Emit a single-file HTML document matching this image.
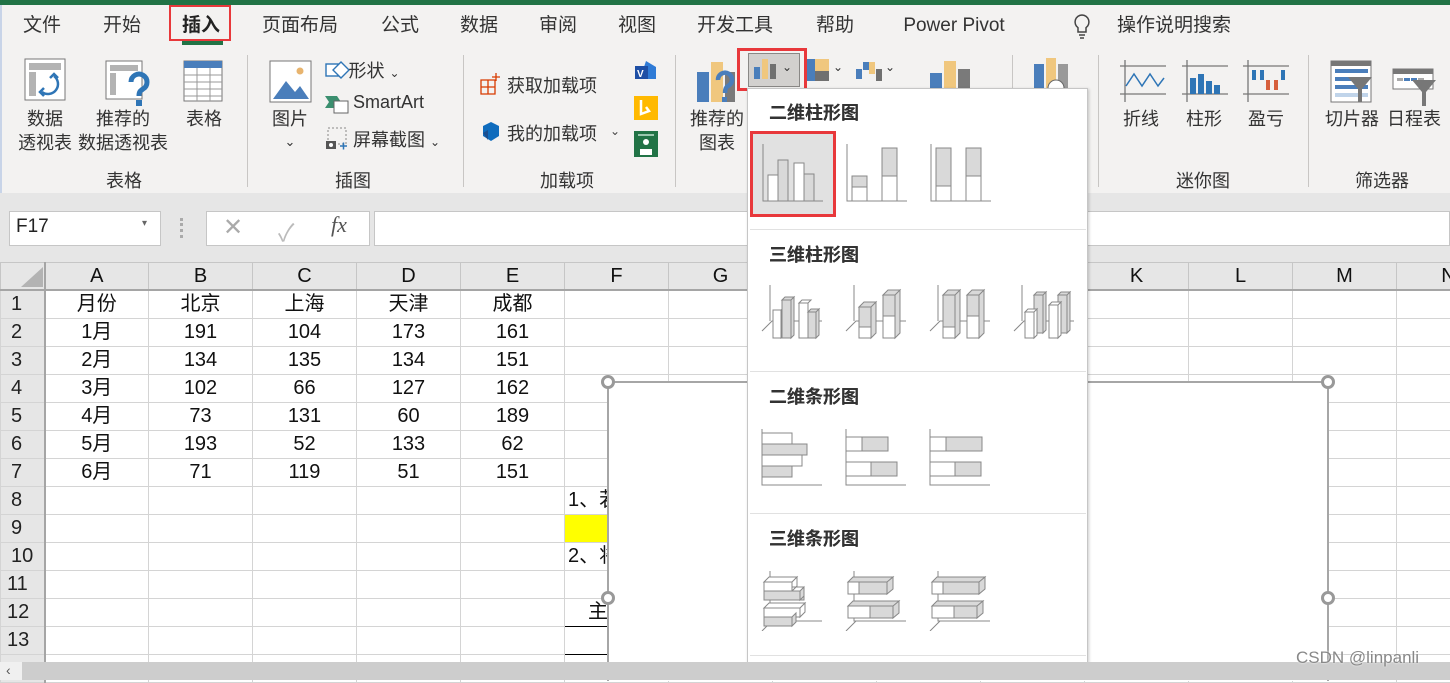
<!DOCTYPE html>
<html><head><meta charset="utf-8">
<style>
*{margin:0;padding:0;box-sizing:border-box}
body{width:1450px;height:680px;overflow:hidden;background:#fff;font-family:"Liberation Sans","Noto Sans CJK SC",sans-serif;position:relative;color:#262626}
.a{position:absolute}
.t{position:absolute;font-size:19px;color:#333;white-space:nowrap;transform:translateX(-50%);line-height:24px}
.r{position:absolute;font-size:18px;color:#333;white-space:nowrap;text-align:center;transform:translateX(-50%);line-height:24px}
.sep{position:absolute;top:55px;width:1px;height:132px;background:#c8c6c4}
.gh{position:absolute;font-size:18px;color:#333;white-space:nowrap;font-weight:bold;text-shadow:0 0 0 #000}
table{border-collapse:collapse;position:absolute;left:0;top:262px;table-layout:fixed;width:1500px}
td{border:1px solid #d4d4d4;height:28px;font-size:20px;text-align:center;color:#111;padding:0;line-height:26px;font-family:"Liberation Sans","Noto Sans CJK SC",sans-serif;overflow:hidden;white-space:nowrap}
tr.hd td{height:27px;background:#e6e6e6;border-color:#c6c6c6;border-bottom:2px solid #a5a5a5}
td.rh{border-right:2px solid #a5a5a5;background:#e6e6e6;text-align:left;padding-left:10px;color:#222}
.hnd{position:absolute;width:14px;height:14px;border:3px solid #999;border-radius:50%;background:#fff}
</style></head><body>
<div class="a" style="left:0;top:0;width:1450px;height:5px;background:#217346"></div>
<div class="a" style="left:0;top:5px;width:1450px;height:188px;background:#f3f2f1"></div>
<div class="a" style="left:0;top:5px;width:2px;height:188px;background:#c8d4e8"></div>
<div class="t" style="left:42px;top:14px">文件</div>
<div class="t" style="left:122px;top:14px">开始</div>
<div class="t" style="left:201px;top:14px;font-weight:bold;color:#222">插入</div>
<div class="a" style="left:169px;top:5px;width:62px;height:36px;border:2px solid #e8383b"></div>
<div class="a" style="left:182px;top:41px;width:41px;height:4px;background:#217346"></div>
<div class="t" style="left:300px;top:14px">页面布局</div>
<div class="t" style="left:400px;top:14px">公式</div>
<div class="t" style="left:479px;top:14px">数据</div>
<div class="t" style="left:558px;top:14px">审阅</div>
<div class="t" style="left:637px;top:14px">视图</div>
<div class="t" style="left:735px;top:14px">开发工具</div>
<div class="t" style="left:835px;top:14px">帮助</div>
<div class="t" style="left:954px;top:14px">Power Pivot</div>
<svg class="a" style="left:1072px;top:13px" width="20" height="28"><path d="M10 2a7 7 0 0 0-4 12.7V19h8v-4.3A7 7 0 0 0 10 2z M7 22h6 M8 25h4" fill="none" stroke="#444" stroke-width="1.5"/></svg>
<div class="t" style="left:1174px;top:14px">操作说明搜索</div>

<svg class="a" style="left:24px;top:58px" width="44" height="44"><rect x="1" y="1" width="40" height="41" fill="#fff" stroke="#777"/><rect x="5" y="5" width="32" height="7" fill="#b3b3b3"/><rect x="5" y="14" width="7" height="24" fill="#b3b3b3"/><path d="M30 18a10 10 0 0 1-12 16" fill="none" stroke="#2e75b6" stroke-width="2.5"/><path d="M26 20l4-4 4 4M20 30l-4 4 4 4" fill="none" stroke="#2e75b6" stroke-width="2.5"/></svg>
<svg class="a" style="left:105px;top:60px" width="48" height="48"><rect x="1" y="1" width="36" height="38" fill="#fff" stroke="#777"/><rect x="5" y="5" width="28" height="6" fill="#b3b3b3"/><rect x="5" y="13" width="6" height="22" fill="#b3b3b3"/><path d="M26 22a8 8 0 1 1 12 7c-3 2-4 3-4 7" fill="none" stroke="#2e75b6" stroke-width="5"/><rect x="31" y="40" width="6" height="6" fill="#2e75b6"/></svg>
<svg class="a" style="left:183px;top:60px" width="42" height="42"><rect x="1" y="1" width="38" height="40" fill="#fff" stroke="#777"/><rect x="1" y="1" width="38" height="7" fill="#4a7ebb"/><path d="M1 15h38M1 22h38M1 29h38M1 36h38M14 8v33M27 8v33" stroke="#999"/></svg>
<div class="r" style="left:45px;top:107px">数据<br>透视表</div>
<div class="r" style="left:123px;top:107px">推荐的<br>数据透视表</div>
<div class="r" style="left:204px;top:107px">表格</div>
<div class="r" style="left:124px;top:169px">表格</div>
<div class="sep" style="left:247px"></div>

<svg class="a" style="left:269px;top:60px" width="44" height="44"><rect x="1" y="1" width="41" height="41" fill="#fff" stroke="#777"/><path d="M4 39l13-18 9 11 5-6 9 13z" fill="#4a7ebb"/><circle cx="31" cy="11" r="3.5" fill="#e8b46e"/></svg>
<div class="r" style="left:290px;top:107px">图片</div>
<div class="r" style="left:290px;top:130px;font-size:13px">⌄</div>
<svg class="a" style="left:325px;top:58px" width="26" height="26"><rect x="1" y="6" width="12" height="12" fill="#fff" stroke="#2e75b6" stroke-width="1.4"/><path d="M16 4l8 8-8 8-8-8z" fill="#fff" stroke="#2e75b6" stroke-width="1.4"/></svg>
<div class="r" style="left:374px;top:59px;font-size:18px">形状 <span style="font-size:12px">⌄</span></div>
<svg class="a" style="left:325px;top:94px" width="26" height="20"><path d="M0 2h12l4 6-4 6H0l4-6z" fill="#3b8f6f"/><rect x="9" y="7" width="14" height="12" fill="#fff" stroke="#666"/></svg>
<div class="a" style="left:353px;top:92px;font-size:18px;color:#333">SmartArt</div>
<svg class="a" style="left:325px;top:126px" width="26" height="26"><rect x="3" y="2" width="18" height="16" fill="none" stroke="#888" stroke-dasharray="2 2"/><rect x="1" y="15" width="10" height="8" fill="#555"/><circle cx="6" cy="19" r="2" fill="#fff"/><path d="M15 20h7M18.5 16.5v7" stroke="#2e75b6" stroke-width="1.5"/></svg>
<div class="a" style="left:353px;top:126px;font-size:18px;color:#333">屏幕截图 <span style="font-size:12px">⌄</span></div>
<div class="r" style="left:353px;top:169px">插图</div>
<div class="sep" style="left:463px"></div>

<svg class="a" style="left:480px;top:73px" width="22" height="22"><path d="M1 7h14v14H1zM1 14h14M8 7v14M12 4h8M16 0v8" fill="none" stroke="#d83b01" stroke-width="1.3"/></svg>
<div class="a" style="left:507px;top:72px;font-size:18px;color:#333">获取加载项</div>
<svg class="a" style="left:481px;top:121px" width="20" height="22"><path d="M10 1l8 4v10l-8 5-8-5V5z" fill="#0f6cbd"/><path d="M2 12l5-3v10z" fill="#1c4f8f"/></svg>
<div class="a" style="left:507px;top:120px;font-size:18px;color:#333">我的加载项</div>
<div class="a" style="left:610px;top:124px;font-size:12px;color:#444">⌄</div>
<svg class="a" style="left:634px;top:60px" width="24" height="24"><path d="M12 1l10 6v12H6z" fill="#2f7bd6"/><rect x="1" y="6" width="13" height="13" fill="#1e4fa5"/><text x="3" y="17" font-size="10" fill="#fff" font-family="Liberation Sans" font-weight="bold">V</text></svg>
<svg class="a" style="left:634px;top:96px" width="24" height="24"><rect width="24" height="24" fill="#ffb900"/><path d="M7 4v14l8-3-3-4" fill="none" stroke="#fff" stroke-width="2.5"/></svg>
<svg class="a" style="left:634px;top:131px" width="24" height="26"><rect width="24" height="26" fill="#217346"/><circle cx="12" cy="11" r="3" fill="#fff"/><path d="M6 24v-6h12v6" fill="#fff"/><path d="M4 4h16" stroke="#9ac7ae" stroke-width="2"/></svg>
<div class="r" style="left:567px;top:169px">加载项</div>
<div class="sep" style="left:675px"></div>

<svg class="a" style="left:697px;top:60px" width="44" height="48"><rect x="0" y="12" width="12" height="30" fill="#4a7ebb"/><rect x="14" y="2" width="12" height="40" fill="#f0c77e"/><rect x="28" y="12" width="10" height="30" fill="#7a7a7a"/><path d="M21 20a7 7 0 1 1 10 6c-2 1-3 3-3 7" fill="none" stroke="#4a7ebb" stroke-width="4.5"/><rect x="25" y="37" width="5" height="5" fill="#4a7ebb"/></svg>
<div class="r" style="left:717px;top:107px">推荐的<br>图表</div>
<div class="a" style="left:748px;top:53px;width:52px;height:34px;background:#d2d0ce;border:1px solid #8a8886"></div>
<svg class="a" style="left:752px;top:57px" width="26" height="26"><rect x="2" y="10" width="6" height="12" fill="#4a7ebb"/><rect x="10" y="2" width="6" height="20" fill="#f0c77e"/><rect x="18" y="7" width="6" height="15" fill="#707070"/></svg>
<div class="a" style="left:782px;top:60px;font-size:12px;color:#333">⌄</div>
<div class="a" style="left:737px;top:48px;width:70px;height:43px;border:3px solid #e8383b"></div>
<svg class="a" style="left:806px;top:57px" width="26" height="26"><rect x="1" y="2" width="8" height="22" fill="#4a7ebb"/><rect x="9" y="2" width="14" height="12" fill="#f0c77e"/><rect x="9" y="14" width="14" height="10" fill="#707070"/></svg>
<div class="a" style="left:833px;top:60px;font-size:12px;color:#333">⌄</div>
<svg class="a" style="left:855px;top:57px" width="28" height="26"><rect x="1" y="12" width="6" height="10" fill="#4a7ebb"/><rect x="8" y="5" width="6" height="8" fill="#4a7ebb"/><rect x="14" y="5" width="6" height="12" fill="#f0c77e"/><rect x="21" y="12" width="6" height="12" fill="#707070"/></svg>
<div class="a" style="left:885px;top:60px;font-size:12px;color:#333">⌄</div>
<svg class="a" style="left:930px;top:59px" width="46" height="36"><rect x="0" y="14" width="12" height="22" fill="#4a7ebb"/><rect x="14" y="2" width="12" height="34" fill="#f0c77e"/><rect x="28" y="10" width="12" height="26" fill="#7a7a7a"/></svg>
<div class="sep" style="left:1012px"></div>
<svg class="a" style="left:1034px;top:58px" width="44" height="34"><rect x="0" y="6" width="10" height="28" fill="#4a7ebb"/><rect x="12" y="0" width="10" height="34" fill="#f0c77e"/><rect x="24" y="6" width="10" height="28" fill="#999"/><circle cx="22" cy="30" r="8" fill="#fff" stroke="#666"/></svg>
<div class="sep" style="left:1098px"></div>

<svg class="a" style="left:1120px;top:60px" width="46" height="42"><path d="M0 6h46M0 34h46M5 0v42" stroke="#777" stroke-width="1.3"/><path d="M6 26l8-12 8 12 8-12 8 12 6-8" fill="none" stroke="#2e75b6" stroke-width="1.5"/></svg>
<svg class="a" style="left:1182px;top:60px" width="46" height="42"><path d="M0 6h46M0 34h46M5 0v42" stroke="#777" stroke-width="1.3"/><rect x="8" y="18" width="6" height="16" fill="#2e75b6"/><rect x="16" y="14" width="6" height="20" fill="#2e75b6"/><rect x="24" y="21" width="6" height="13" fill="#2e75b6"/><rect x="32" y="25" width="6" height="9" fill="#2e75b6"/></svg>
<svg class="a" style="left:1243px;top:60px" width="46" height="42"><path d="M0 6h46M0 34h46M5 0v42" stroke="#777" stroke-width="1.3"/><rect x="9" y="10" width="4" height="10" fill="#2e75b6"/><rect x="17" y="10" width="4" height="10" fill="#2e75b6"/><rect x="23" y="20" width="4" height="10" fill="#d65f3c"/><rect x="31" y="20" width="4" height="10" fill="#d65f3c"/><rect x="38" y="10" width="4" height="10" fill="#2e75b6"/></svg>
<div class="r" style="left:1141px;top:107px">折线</div>
<div class="r" style="left:1204px;top:107px">柱形</div>
<div class="r" style="left:1266px;top:107px">盈亏</div>
<div class="r" style="left:1203px;top:169px">迷你图</div>
<div class="sep" style="left:1308px"></div>
<svg class="a" style="left:1330px;top:60px" width="44" height="44"><rect x="1" y="1" width="40" height="41" fill="#fff" stroke="#777"/><rect x="1" y="1" width="40" height="5" fill="#777"/><rect x="5" y="9" width="33" height="4" fill="#4a7ebb"/><rect x="5" y="17" width="33" height="4" fill="#4a7ebb"/><rect x="5" y="25" width="33" height="4" fill="#4a7ebb"/><rect x="5" y="33" width="33" height="4" fill="#c0d4ea"/><path d="M18 17h24l-10 12v13h-4V29z" fill="#777"/></svg>
<svg class="a" style="left:1392px;top:68px" width="46" height="40"><rect x="1" y="1" width="40" height="20" fill="#fff" stroke="#777"/><rect x="1" y="1" width="40" height="5" fill="#777"/><rect x="5" y="10" width="6" height="3" fill="#aaa"/><rect x="12" y="10" width="6" height="3" fill="#4a7ebb"/><rect x="19" y="10" width="6" height="3" fill="#4a7ebb"/><rect x="26" y="10" width="6" height="3" fill="#aaa"/><path d="M20 12h24l-10 12v14h-4V24z" fill="#777"/></svg>
<div class="r" style="left:1352px;top:107px">切片器</div>
<div class="r" style="left:1414px;top:107px">日程表</div>
<div class="r" style="left:1382px;top:169px">筛选器</div>

<div class="a" style="left:0;top:193px;width:1450px;height:69px;background:#e6e6e6"></div>
<div class="a" style="left:9px;top:211px;width:152px;height:35px;background:#fff;border:1px solid #c6c6c6"></div>
<div class="a" style="left:16px;top:216px;font-size:19px;color:#222">F17</div>
<div class="a" style="left:142px;top:218px;font-size:10px;color:#666">▾</div>
<div class="a" style="left:180px;top:218px;width:3px;height:20px;border-left:3px dotted #aaa"></div>
<div class="a" style="left:206px;top:211px;width:164px;height:35px;background:#fff;border:1px solid #c6c6c6"></div>
<div class="a" style="left:223px;top:213px;font-size:24px;color:#aaa">✕</div>
<div class="a" style="left:278px;top:213px;font-size:24px;color:#bbb">✓</div>
<div class="a" style="left:331px;top:212px;font-size:22px;color:#555;font-family:'Liberation Serif',serif;font-style:italic">fx</div>
<div class="a" style="left:374px;top:211px;width:1076px;height:35px;background:#fff;border:1px solid #c6c6c6"></div>

<table>
<colgroup><col style="width:44px"><col style="width:104px"><col style="width:104px"><col style="width:104px"><col style="width:104px"><col style="width:104px"><col style="width:104px"><col style="width:104px"><col style="width:104px"><col style="width:104px"><col style="width:104px"><col style="width:104px"><col style="width:104px"><col style="width:104px"><col style="width:104px"></colgroup>
<tr class="hd"><td style="border-right:2px solid #a5a5a5"><svg width="30" height="22" style="display:block;margin-left:12px"><path d="M30 2v20H8z" fill="#b3b3b3"/></svg></td><td>A</td><td>B</td><td>C</td><td>D</td><td>E</td><td>F</td><td>G</td><td>H</td><td>I</td><td>J</td><td>K</td><td>L</td><td>M</td><td>N</td></tr>
<tr><td class="rh">1</td><td>月份</td><td>北京</td><td>上海</td><td>天津</td><td>成都</td><td></td><td></td><td></td><td></td><td></td><td></td><td></td><td></td><td></td></tr>
<tr><td class="rh">2</td><td>1月</td><td>191</td><td>104</td><td>173</td><td>161</td><td></td><td></td><td></td><td></td><td></td><td></td><td></td><td></td><td></td></tr>
<tr><td class="rh">3</td><td>2月</td><td>134</td><td>135</td><td>134</td><td>151</td><td></td><td></td><td></td><td></td><td></td><td></td><td></td><td></td><td></td></tr>
<tr><td class="rh">4</td><td>3月</td><td>102</td><td>66</td><td>127</td><td>162</td><td></td><td></td><td></td><td></td><td></td><td></td><td></td><td></td><td></td></tr>
<tr><td class="rh">5</td><td>4月</td><td>73</td><td>131</td><td>60</td><td>189</td><td></td><td></td><td></td><td></td><td></td><td></td><td></td><td></td><td></td></tr>
<tr><td class="rh">6</td><td>5月</td><td>193</td><td>52</td><td>133</td><td>62</td><td></td><td></td><td></td><td></td><td></td><td></td><td></td><td></td><td></td></tr>
<tr><td class="rh">7</td><td>6月</td><td>71</td><td>119</td><td>51</td><td>151</td><td></td><td></td><td></td><td></td><td></td><td></td><td></td><td></td><td></td></tr>
<tr><td class="rh">8</td><td></td><td></td><td></td><td></td><td></td><td style="text-align:left;padding-left:3px">1、若</td><td></td><td></td><td></td><td></td><td></td><td></td><td></td><td></td></tr>
<tr><td class="rh">9</td><td></td><td></td><td></td><td></td><td></td><td style="background:#ffff00"></td><td></td><td></td><td></td><td></td><td></td><td></td><td></td><td></td></tr>
<tr><td class="rh">10</td><td></td><td></td><td></td><td></td><td></td><td style="text-align:left;padding-left:3px">2、将</td><td></td><td></td><td></td><td></td><td></td><td></td><td></td><td></td></tr>
<tr><td class="rh" style="padding-left:6px">11</td><td></td><td></td><td></td><td></td><td></td><td></td><td></td><td></td><td></td><td></td><td></td><td></td><td></td><td></td></tr>
<tr><td class="rh" style="padding-left:6px">12</td><td></td><td></td><td></td><td></td><td></td><td style="border:1px solid #000;text-align:right;padding-right:60px">主</td><td></td><td></td><td></td><td></td><td></td><td></td><td></td><td></td></tr>
<tr><td class="rh" style="padding-left:6px">13</td><td></td><td></td><td></td><td></td><td></td><td style="border:1px solid #000"></td><td></td><td></td><td></td><td></td><td></td><td></td><td></td><td></td></tr>
<tr><td class="rh"></td><td></td><td></td><td></td><td></td><td></td><td></td><td></td><td></td><td></td><td></td><td></td><td></td><td></td><td></td></tr>
</table>

<div class="a" style="left:607px;top:381px;width:722px;height:300px;background:#fff;border:2px solid #a6a6a6;border-bottom:none"></div>
<div class="hnd" style="left:601px;top:375px"></div>
<div class="hnd" style="left:1321px;top:375px"></div>
<div class="hnd" style="left:601px;top:591px"></div>
<div class="hnd" style="left:1321px;top:591px"></div>

<div class="a" style="left:747px;top:88px;width:341px;height:580px;background:#fff;border:1px solid #c6c6c6;box-shadow:1px 1px 3px rgba(0,0,0,.2)"></div>
<div class="gh" style="left:769px;top:99px">二维柱形图</div>
<div class="a" style="left:750px;top:131px;width:86px;height:86px;background:#e1e1e1;border:3px solid #e8383b"></div>
<svg class="a" style="left:755px;top:140px" width="320" height="65">
<g fill="#fff" stroke="#888" stroke-width="1">
<path d="M8 4v57h60" fill="none"/><rect x="13" y="35" width="10" height="26"/><rect x="23" y="20" width="10" height="41" fill="#d9d9d9"/><rect x="39" y="23" width="10" height="38"/><rect x="49" y="34" width="10" height="27" fill="#d9d9d9"/>
<path d="M92 4v57h60" fill="none"/><rect x="97" y="36" width="15" height="25" fill="#d9d9d9"/><rect x="97" y="47" width="15" height="14"/><rect x="127" y="8" width="15" height="53" fill="#d9d9d9"/><rect x="127" y="36" width="15" height="25"/>
<path d="M176 4v57h60" fill="none"/><rect x="181" y="8" width="15" height="53" fill="#d9d9d9"/><rect x="181" y="46" width="15" height="15"/><rect x="211" y="8" width="15" height="53" fill="#d9d9d9"/><rect x="211" y="36" width="15" height="25"/>
</g></svg>
<div class="a" style="left:750px;top:229px;width:336px;height:1px;background:#e1e1e1"></div>
<div class="gh" style="left:769px;top:241px">三维柱形图</div>
<svg class="a" style="left:760px;top:285px" width="320" height="60">
<g stroke="#888" stroke-width="1" fill="#fff">
<path d="M10 0v36M2 46l10-10h50M94 0v36M86 46l10-10h50M178 0v36M170 46l10-10h50M262 0v36M254 46l10-10h50" fill="none"/>
<rect x="13" y="25" width="8" height="28"/><path d="M21 25l4-3v28l-4 3z"/><rect x="22" y="15" width="9" height="38" fill="#d9d9d9"/><path d="M22 15l3-3h9l-3 3zM31 15l3-3v38l-3 3z" fill="#d9d9d9"/>
<rect x="39" y="18" width="9" height="35"/><path d="M39 18l3-3h9l-3 3z"/><rect x="48" y="27" width="8" height="26" fill="#d9d9d9"/><path d="M48 27l3-3h8l-3 3zM56 27l3-3v26l-3 3z" fill="#d9d9d9"/>
<rect x="99" y="22" width="12" height="31"/><rect x="99" y="22" width="12" height="20" fill="#d9d9d9"/><path d="M99 22l5-5h12l-5 5zM111 22l5-5v31l-5 5z" fill="#d9d9d9"/>
<rect x="123" y="10" width="12" height="43"/><rect x="123" y="10" width="12" height="21" fill="#d9d9d9"/><path d="M123 10l5-5h12l-5 5zM135 10l5-5v43l-5 5z" fill="#d9d9d9"/>
<rect x="183" y="10" width="12" height="43"/><rect x="183" y="10" width="12" height="32" fill="#d9d9d9"/><path d="M183 10l5-5h12l-5 5zM195 10l5-5v43l-5 5z" fill="#d9d9d9"/>
<rect x="207" y="10" width="12" height="43"/><rect x="207" y="10" width="12" height="21" fill="#d9d9d9"/><path d="M207 10l5-5h12l-5 5zM219 10l5-5v43l-5 5z" fill="#d9d9d9"/>
<rect x="274" y="10" width="9" height="38" fill="#d9d9d9"/><path d="M274 10l3-3h9l-3 3zM283 10l3-3v38l-3 3z" fill="#d9d9d9"/>
<rect x="265" y="27" width="9" height="26"/><path d="M265 27l3-3h9l-3 3zM274 27l3-3v26l-3 3z"/>
<rect x="298" y="10" width="9" height="38" fill="#d9d9d9"/><path d="M298 10l3-3h9l-3 3zM307 10l3-3v38l-3 3z" fill="#d9d9d9"/>
<rect x="289" y="20" width="9" height="33"/><path d="M289 20l3-3h9l-3 3zM298 20l3-3v33l-3 3z"/>
</g></svg>
<div class="a" style="left:750px;top:371px;width:336px;height:1px;background:#e1e1e1"></div>
<div class="gh" style="left:769px;top:383px">二维条形图</div>
<svg class="a" style="left:760px;top:429px" width="320" height="58">
<g stroke="#888" stroke-width="1" fill="#fff">
<path d="M2 0v56h60M86 0v56h60M170 0v56h60" fill="none"/>
<rect x="2" y="4" width="30" height="11"/><rect x="2" y="15" width="45" height="11" fill="#d9d9d9"/><rect x="2" y="26" width="40" height="11"/><rect x="2" y="37" width="30" height="11" fill="#d9d9d9"/>
<rect x="86" y="8" width="16" height="14"/><rect x="102" y="8" width="26" height="14" fill="#d9d9d9"/><rect x="86" y="33" width="25" height="14"/><rect x="111" y="33" width="26" height="14" fill="#d9d9d9"/>
<rect x="170" y="8" width="16" height="14"/><rect x="186" y="8" width="36" height="14" fill="#d9d9d9"/><rect x="170" y="33" width="25" height="14"/><rect x="195" y="33" width="26" height="14" fill="#d9d9d9"/>
</g></svg>
<div class="a" style="left:750px;top:513px;width:336px;height:1px;background:#e1e1e1"></div>
<div class="gh" style="left:769px;top:525px">三维条形图</div>
<svg class="a" style="left:760px;top:571px" width="320" height="60">
<g stroke="#888" stroke-width="1" fill="#fff">
<path d="M10 0v50h52M2 60l10-10M94 0v50h52M86 60l10-10M178 0v50h52M170 60l10-10" fill="none"/>
<rect x="4" y="11" width="28" height="9"/><path d="M4 11l5-5h28l-5 5zM32 11l5-5v9l-5 5z"/>
<rect x="4" y="20" width="40" height="9" fill="#d9d9d9"/><path d="M40 20l4-4v9l-4 4z" fill="#d9d9d9"/><path d="M32 16h12" fill="none"/>
<rect x="4" y="37" width="36" height="9"/><path d="M4 37l5-5h36l-5 5zM40 37l5-5v9l-5 5z"/>
<rect x="4" y="46" width="28" height="9" fill="#d9d9d9"/><path d="M32 46l4-4v9l-4 4z" fill="#d9d9d9"/>
<rect x="88" y="11" width="11" height="12"/><rect x="99" y="11" width="28" height="12" fill="#d9d9d9"/><path d="M88 11l5-5h40l-6 5zM127 11l6-5v12l-6 5z" fill="#d9d9d9"/>
<rect x="88" y="35" width="22" height="12"/><rect x="110" y="35" width="23" height="12" fill="#d9d9d9"/><path d="M88 35l5-5h46l-6 5zM133 35l6-5v12l-6 5z" fill="#d9d9d9"/>
<rect x="172" y="11" width="11" height="12"/><rect x="183" y="11" width="36" height="12" fill="#d9d9d9"/><path d="M172 11l5-5h48l-6 5zM219 11l6-5v12l-6 5z" fill="#d9d9d9"/>
<rect x="172" y="35" width="22" height="12"/><rect x="194" y="35" width="23" height="12" fill="#d9d9d9"/><path d="M172 35l5-5h46l-6 5zM217 35l6-5v12l-6 5z" fill="#d9d9d9"/>
</g></svg>
<div class="a" style="left:750px;top:655px;width:336px;height:1px;background:#e1e1e1"></div>

<div class="a" style="left:0;top:662px;width:1450px;height:18px;background:#cdcdcd"></div>
<div class="a" style="left:0;top:662px;width:22px;height:18px;background:#f0f0f0;font-size:14px;color:#555;padding-left:6px">‹</div>
<div class="a" style="left:1296px;top:648px;font-size:17px;color:#888;text-shadow:0 0 2px #fff">CSDN @linpanli</div>
</body></html>
